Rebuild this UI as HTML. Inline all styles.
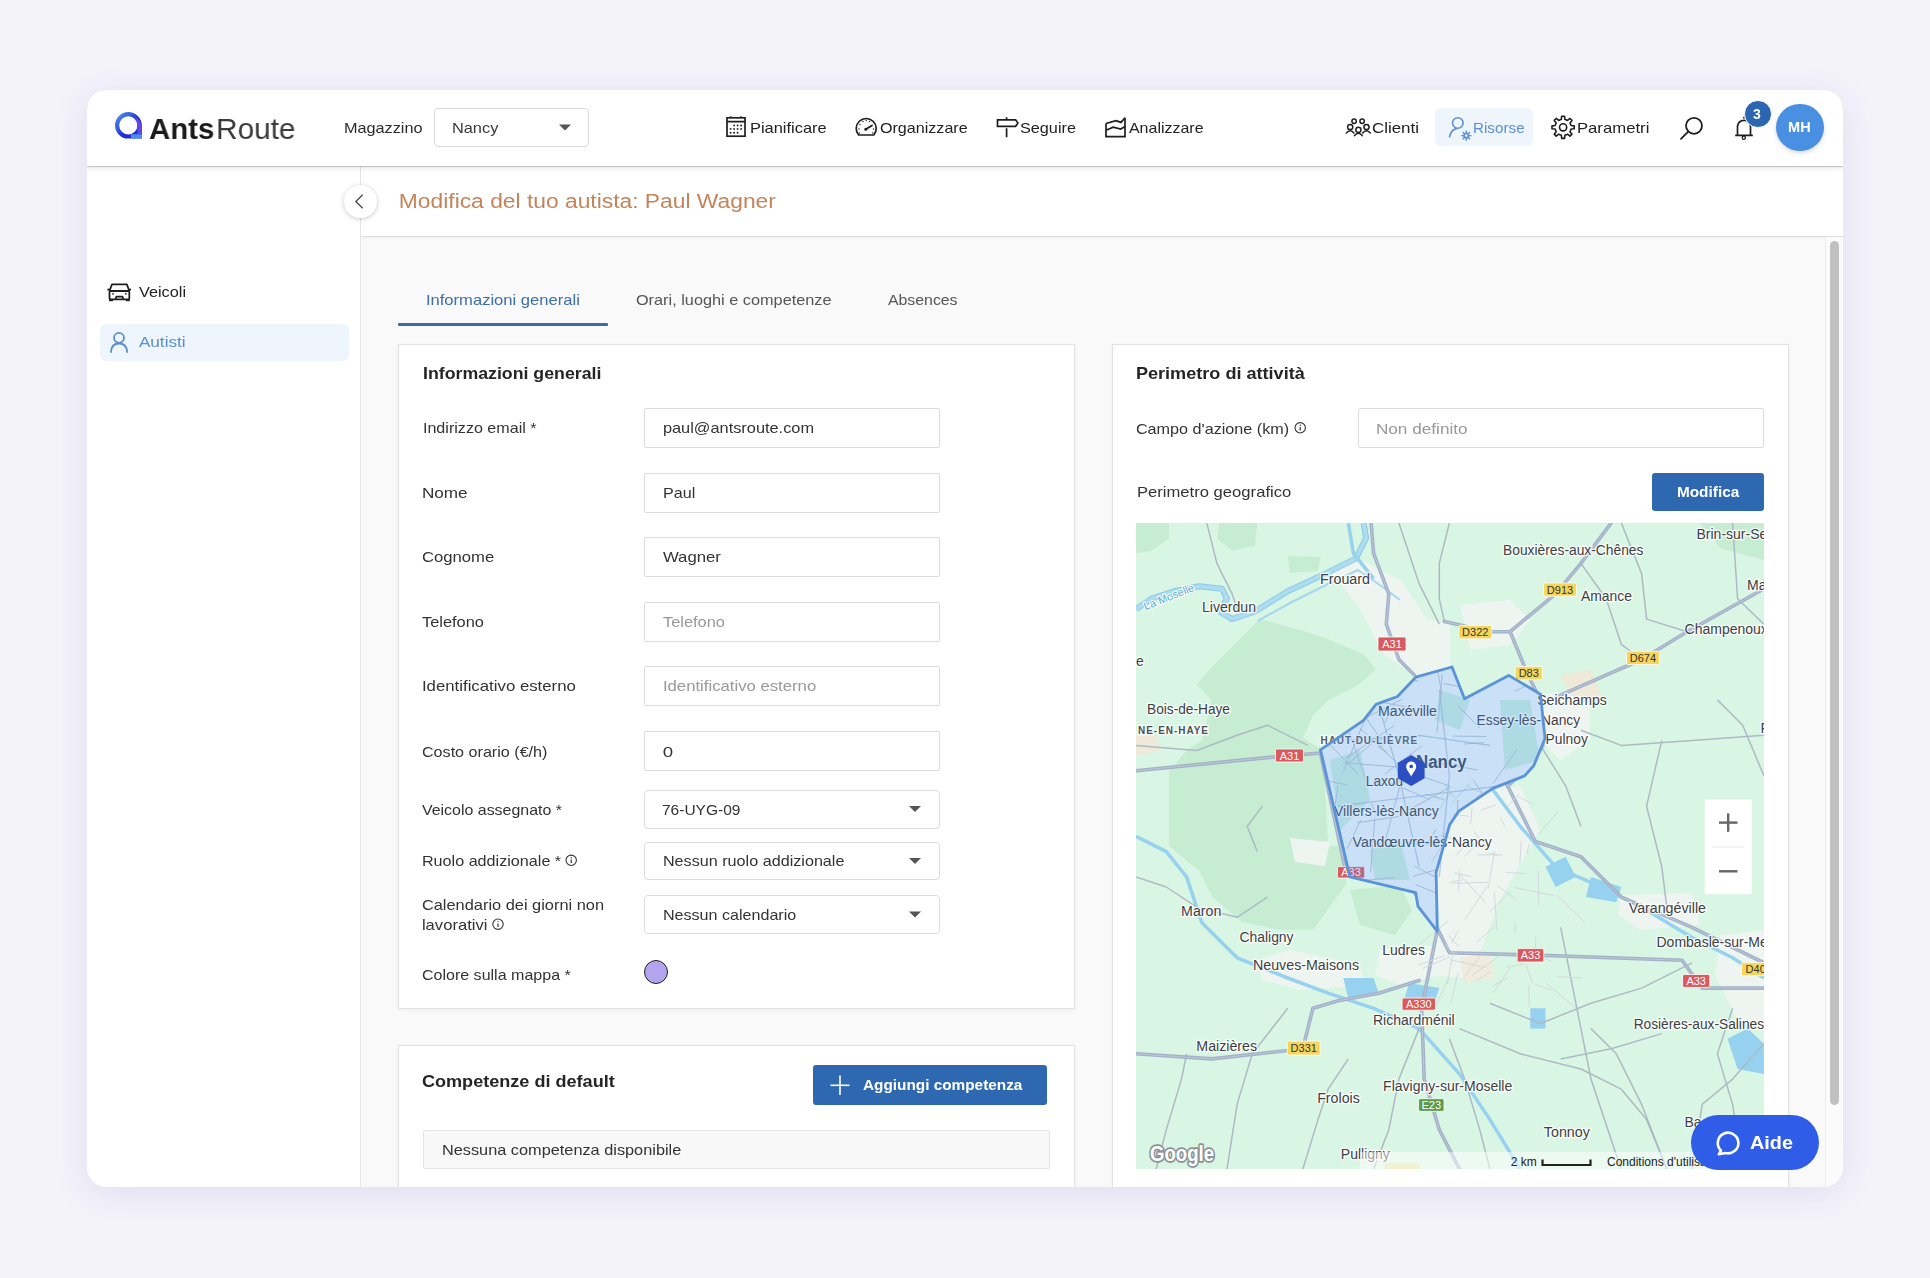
<!DOCTYPE html>
<html><head><meta charset="utf-8">
<style>
html,body{margin:0;padding:0}
body{width:1930px;height:1278px;background:#f4f2fb;position:relative;overflow:hidden;font-family:"Liberation Sans",sans-serif}
.t{position:absolute;line-height:1;white-space:nowrap;will-change:transform}
.a{position:absolute}
.card{position:absolute;left:87px;top:90px;width:1756px;height:1097px;background:#fff;border-radius:20px;overflow:hidden;box-shadow:0 6px 36px rgba(60,50,120,0.10)}
.in{position:absolute;left:-87px;top:-90px;width:1930px;height:1278px}
.inp{position:absolute;background:#fff;border:1px solid #dcdcdc;box-sizing:border-box;border-radius:2px}
.dd{position:absolute;background:#fff;border:1px solid #dcdcdc;box-sizing:border-box;border-radius:4px}
.box{position:absolute;background:#fff;border:1px solid #e2e2e2;box-sizing:border-box;box-shadow:0 1px 4px rgba(0,0,0,0.05)}
.btn{position:absolute;background:#2e68b1;border-radius:3px}
</style></head><body>
<div class="card"><div class="in">
<!-- main bg -->
<div class="a" style="left:361px;top:166px;width:1482px;height:1021px;background:#f9f9f9"></div>
<!-- title bar -->
<div class="a" style="left:361px;top:166px;width:1482px;height:70px;background:#fff;border-bottom:1px solid #dedede;box-shadow:0 1px 3px rgba(0,0,0,0.06)"></div>
<!-- sidebar -->
<div class="a" style="left:87px;top:166px;width:274px;height:1021px;background:#fff;border-right:1px solid #e6e6e6;box-sizing:border-box"></div>
<div class="a" style="left:99.5px;top:323.5px;width:249px;height:37px;background:#eef5fc;border-radius:6px"></div>
<!-- header -->
<div class="a" style="left:87px;top:90px;width:1756px;height:75.5px;background:#fff;box-shadow:0 1px 1px rgba(0,0,0,0.16),0 2px 6px rgba(0,0,0,0.10)"></div>
<div class="a" style="left:1434.7px;top:108px;width:98.5px;height:37.8px;background:#eef5fd;border-radius:6px"></div>
<div class="dd" style="left:433.6px;top:107.6px;width:155.4px;height:39.4px;border-color:#d9d9d9"></div>
<div class="a" style="left:1776px;top:103.8px;width:47.6px;height:47.6px;border-radius:50%;background:#4a90e2;box-shadow:0 2px 4px rgba(0,0,0,0.15)"></div>
<!-- scrollbar -->
<div class="a" style="left:1825px;top:237px;width:18px;height:950px;background:#fbfbfb;border-left:1px solid #ececec;box-sizing:border-box"></div>
<div class="a" style="left:1830.3px;top:241px;width:8.8px;height:864px;background:#c1c1c1;border-radius:5px"></div>
<!-- tabs -->
<div class="a" style="left:397.8px;top:322.8px;width:210.2px;height:3.2px;background:#3b6aa5;border-radius:1px"></div>
<!-- card1 -->
<div class="box" style="left:398px;top:344.3px;width:677px;height:664.5px"></div>
<div class="inp" style="left:644.4px;top:408px;width:295.6px;height:40.3px"></div>
<div class="inp" style="left:644.4px;top:472.6px;width:295.6px;height:40.3px"></div>
<div class="inp" style="left:644.4px;top:537px;width:295.6px;height:40.3px"></div>
<div class="inp" style="left:644.4px;top:601.6px;width:295.6px;height:40.3px"></div>
<div class="inp" style="left:644.4px;top:666px;width:295.6px;height:40.3px"></div>
<div class="inp" style="left:644.4px;top:730.6px;width:295.6px;height:40px"></div>
<div class="dd" style="left:644.4px;top:789.6px;width:295.6px;height:39px"></div>
<div class="dd" style="left:644.4px;top:841.8px;width:295.6px;height:38.6px"></div>
<div class="dd" style="left:644.4px;top:894.6px;width:295.6px;height:39.8px"></div>
<div class="a" style="left:643.8px;top:960.3px;width:24px;height:24px;border-radius:50%;background:#b2a5ee;border:1.5px solid #222;box-sizing:border-box"></div>
<!-- card2 -->
<div class="box" style="left:398px;top:1045.3px;width:677px;height:200px"></div>
<div class="btn" style="left:813.3px;top:1065.2px;width:234px;height:40.1px"></div>
<div class="a" style="left:423.3px;top:1130px;width:626.7px;height:39px;background:#f8f8f8;border:1px solid #e4e4e4;box-sizing:border-box;border-radius:2px"></div>
<!-- card3 -->
<div class="box" style="left:1111.8px;top:344.3px;width:677px;height:900px"></div>
<div class="inp" style="left:1358px;top:408.1px;width:405.6px;height:40.4px"></div>
<div class="btn" style="left:1652.2px;top:472.8px;width:111.4px;height:37.9px"></div>
<svg class="a" style="left:1136px;top:523px" width="628" height="646" viewBox="1136 523 628 646">
<rect x="1136" y="523" width="628" height="646" fill="#d9f5e3"/>
<path d="M1168.9 846.1 L1168.9 770.8 L1186.6 750.6 L1201.7 740.4 L1211.9 700 L1196.7 684.8 L1211.9 667.1 L1259.9 619.1 L1297.8 629.2 L1328.2 639.3 L1363.6 654.5 L1376.2 669.6 L1358.5 684.8 L1328.2 700 L1313 715.2 L1302.9 737.9 L1323.1 750.6 L1328.2 846.1 Z" fill="#c6edd2"/>
<path d="M1199.4 846 L1346.3 846 L1346.3 884 L1313.4 929.6 L1277.9 929.6 L1242.4 922 L1212 896.7 L1199.4 871.3 L1168.9 846.1 Z" fill="#c6edd2"/>
<path d="M1136 523 L1168.9 523 L1168.9 538.2 L1151.2 550.8 L1136 553.3 Z" fill="#c6edd2"/>
<path d="M1219.4 523 L1257.4 523 L1254.8 545.8 L1232.1 550.8 L1216.9 538.2 Z" fill="#c6edd2"/>
<path d="M1287.7 555.9 L1320.6 557 L1318 571 L1290 573 Z" fill="#c6edd2"/>
<path d="M1350 890 L1400 885 L1412 910 L1395 935 L1360 925 Z" fill="#c6edd2"/>
<path d="M1700 523 L1764 523 L1764 560 L1720 548 Z" fill="#c6edd2"/>
<path d="M1328.2 568.5 L1363.6 560.9 L1401.5 581.2 L1426.8 619.1 L1450 624.1 L1450 674.7 L1414.1 674.7 L1383.8 654.5 L1358.5 606.4 Z" fill="#eef5f1"/>
<path d="M1460 605 L1510 600 L1530 620 L1510 645 L1470 650 Z" fill="#eef5f1"/>
<path d="M1439 796 L1520 786 L1540 830 L1500 900 L1470 978 L1420 975 L1440 930 L1436 872 Z" fill="#eef5f1"/>
<path d="M1257 960 L1290 950 L1360 965 L1365 985 L1300 990 L1262 980 Z" fill="#eef5f1"/>
<path d="M1621 895 L1692 893 L1700 925 L1640 930 L1618 915 Z" fill="#eef5f1"/>
<path d="M1720 935 L1764 930 L1764 1030 L1735 1015 L1715 975 Z" fill="#eef5f1"/>
<path d="M1540 695 L1590 690 L1590 740 L1560 760 L1540 740 Z" fill="#eef5f1"/>
<path d="M1380 950 L1430 945 L1440 975 L1400 985 L1375 975 Z" fill="#eef5f1"/>
<path d="M1290 838 L1330 842 L1325 866 L1295 862 Z" fill="#eef5f1"/>
<path d="M1560.7 674.7 L1591.0 669.6 L1601.1 694.9 L1575.8 705.0 Z" fill="#efe9d9"/>
<path d="M1459.6 957.8 L1489.9 952.7 L1494.9 978.0 L1464.6 983.1 Z" fill="#f0ebdc"/>
<path d="M1136.0 735.3 L1156.2 735.3 L1161.3 750.5 L1136.0 755.6 Z" fill="#efe9d9"/>
<path d="M1545.5 866.8 L1565.7 856.7 L1575.8 876.9 L1555.6 887.0 Z" fill="#96d2ef"/>
<path d="M1591.0 876.9 L1621.3 887.0 L1616.3 902.2 L1585.9 897.1 Z" fill="#96d2ef"/>
<path d="M1727.5 1038.7 L1747.7 1028.6 L1763.9 1043.7 L1763.9 1074.1 L1737.6 1069.0 Z" fill="#96d2ef"/>
<path d="M1343.3 978.0 L1373.6 978.0 L1378.7 993.2 L1348.3 998.2 Z" fill="#96d2ef"/>
<path d="M1409.0 983.1 L1439.3 988.1 L1434.3 1003.3 L1403.9 1000.8 Z" fill="#96d2ef"/>
<path d="M1530.3 1008.3 L1545.5 1008.3 L1545.5 1028.6 L1530.3 1028.6 Z" fill="#96d2ef"/>
<path d="M1136 609 L1151.2 598.9 L1173.9 591.3 L1199.2 586.2 L1222 588.7 L1227 598.9 L1219.4 611.5 L1232.1 619.1 L1254.8 611.5 L1287.7 591.3 L1325.6 573.6 L1356 558.4 L1366.1 538.2 L1363.6 523" fill="none" stroke="#8fc9e6" stroke-width="6" stroke-linejoin="round"/>
<path d="M1136 609 L1151.2 598.9 L1173.9 591.3 L1199.2 586.2 L1222 588.7 L1227 598.9 L1219.4 611.5 L1232.1 619.1 L1254.8 611.5 L1287.7 591.3 L1325.6 573.6 L1356 558.4 L1366.1 538.2 L1363.6 523" fill="none" stroke="#abdcf1" stroke-width="4" stroke-linejoin="round"/>
<path d="M1257.4 621 L1290 603 L1330 583 L1358 570 L1380 585 L1400 600" fill="none" stroke="#a5d8ef" stroke-width="2" stroke-linejoin="round"/>
<path d="M1136.0 836.4 L1166.3 851.6 L1186.6 876.9 L1201.7 922.4 L1237.1 957.8 L1287.7 978.0 L1328.1 993.2 L1373.6 1008.3 L1419.1 1028.6 L1459.6 1074.1 L1489.9 1119.6 L1520.2 1169.1" fill="none" stroke="#96d2ef" stroke-width="3.5" stroke-linejoin="round"/>
<path d="M1469.7 745.4 L1489.9 785.9 L1520.2 826.3 L1555.6 866.8 L1601.1 887.0 L1641.6 907.2 L1692.1 937.6 L1732.6 957.8 L1763.9 978.0" fill="none" stroke="#96d2ef" stroke-width="3.5" stroke-linejoin="round"/>
<path d="M1348.3 523.0 L1353.4 553.3 L1373.6 578.6" fill="none" stroke="#96d2ef" stroke-width="3.5" stroke-linejoin="round"/>
<path d="M1136.0 745.4 L1196.7 750.5 L1237.1 735.3 L1267.4 725.2 L1307.9 745.4" fill="none" stroke="#adbac6" stroke-width="1.5" stroke-linejoin="round"/>
<path d="M1206.8 523.0 L1216.9 563.4 L1232.1 593.8 L1237.1 608.9" fill="none" stroke="#adbac6" stroke-width="1.5" stroke-linejoin="round"/>
<path d="M1439.3 624.1 L1419.1 583.7 L1409.0 553.3 L1398.9 523.0" fill="none" stroke="#adbac6" stroke-width="1.5" stroke-linejoin="round"/>
<path d="M1661.8 740.4 L1646.6 806.1 L1661.8 866.8 L1666.8 907.2" fill="none" stroke="#adbac6" stroke-width="1.5" stroke-linejoin="round"/>
<path d="M1580.9 730.3 L1621.3 745.4 L1692.1 740.4 L1763.9 735.3" fill="none" stroke="#adbac6" stroke-width="1.5" stroke-linejoin="round"/>
<path d="M1540.4 745.4 L1565.7 785.9 L1580.9 826.3" fill="none" stroke="#adbac6" stroke-width="1.5" stroke-linejoin="round"/>
<path d="M1621.3 523.0 L1641.6 573.6 L1646.6 619.1 L1687.1 631.7" fill="none" stroke="#adbac6" stroke-width="1.5" stroke-linejoin="round"/>
<path d="M1732.6 523.0 L1737.6 598.8 L1763.9 624.1" fill="none" stroke="#adbac6" stroke-width="1.5" stroke-linejoin="round"/>
<path d="M1717.4 699.9 L1742.7 725.2 L1763.9 775.8" fill="none" stroke="#adbac6" stroke-width="1.5" stroke-linejoin="round"/>
<path d="M1136.0 876.9 L1166.3 887.0 L1196.7 907.2 L1237.1 917.3 L1267.4 897.1" fill="none" stroke="#adbac6" stroke-width="1.5" stroke-linejoin="round"/>
<path d="M1156.2 1169.1 L1166.3 1129.7 L1181.5 1079.1 L1186.6 1053.8" fill="none" stroke="#adbac6" stroke-width="1.5" stroke-linejoin="round"/>
<path d="M1227.0 1169.1 L1237.1 1104.4 L1252.3 1053.8 L1287.7 1008.3" fill="none" stroke="#adbac6" stroke-width="1.5" stroke-linejoin="round"/>
<path d="M1302.8 1169.1 L1318.0 1119.6 L1328.1 1089.2 L1348.3 1058.9" fill="none" stroke="#adbac6" stroke-width="1.5" stroke-linejoin="round"/>
<path d="M1373.6 1169.1 L1388.8 1129.7 L1398.9 1079.1 L1419.1 1028.6" fill="none" stroke="#adbac6" stroke-width="1.5" stroke-linejoin="round"/>
<path d="M1489.9 1169.1 L1479.8 1129.7 L1464.6 1079.1 L1449.4 1038.7" fill="none" stroke="#adbac6" stroke-width="1.5" stroke-linejoin="round"/>
<path d="M1666.8 1169.1 L1641.6 1104.4 L1616.3 1053.8 L1591.0 1028.6" fill="none" stroke="#adbac6" stroke-width="1.5" stroke-linejoin="round"/>
<path d="M1742.7 1169.1 L1732.6 1104.4 L1717.4 1053.8 L1732.6 1008.3" fill="none" stroke="#adbac6" stroke-width="1.5" stroke-linejoin="round"/>
<path d="M1489.9 1003.3 L1540.4 1023.5 L1591.0 1003.3 L1641.6 988.1 L1692.1 962.8" fill="none" stroke="#adbac6" stroke-width="1.5" stroke-linejoin="round"/>
<path d="M1459.6 1028.6 L1520.2 1053.8 L1580.9 1069.0 L1621.3 1089.2 L1646.6 1119.6 L1666.8 1169.1" fill="none" stroke="#adbac6" stroke-width="1.5" stroke-linejoin="round"/>
<path d="M1560.7 1058.9 L1611.2 1048.8 L1661.8 1033.6" fill="none" stroke="#adbac6" stroke-width="1.5" stroke-linejoin="round"/>
<path d="M1449.4 523.0 L1439.3 563.4 L1439.3 598.8 L1444.4 621.6" fill="none" stroke="#adbac6" stroke-width="1.5" stroke-linejoin="round"/>
<path d="M1580.9 563.4 L1606.2 598.8 L1621.3 644.3 L1641.6 659.5" fill="none" stroke="#adbac6" stroke-width="1.5" stroke-linejoin="round"/>
<path d="M1763.9 1043.7 L1732.6 1079.1 L1702.2 1104.4 L1692.1 1169.1" fill="none" stroke="#adbac6" stroke-width="1.5" stroke-linejoin="round"/>
<path d="M1262.4 806.1 L1247.2 826.3 L1257.3 851.6" fill="none" stroke="#adbac6" stroke-width="1.5" stroke-linejoin="round"/>
<path d="M1560.7 927.4 L1591.0 1079.1 L1616.3 1155.0 L1621.3 1169.1" fill="none" stroke="#adbac6" stroke-width="1.5" stroke-linejoin="round"/>
<path d="M1136.0 770.7 L1277.6 756.6 L1320.5 753.0" fill="none" stroke="#a2b0c8" stroke-width="3.6" stroke-linejoin="round" stroke-linecap="round"/>
<path d="M1371.1 523.0 L1373.6 553.3 L1388.8 593.8 L1386.3 624.1 L1398.9 659.5 L1414.1 674.7" fill="none" stroke="#a2b0c8" stroke-width="3.6" stroke-linejoin="round" stroke-linecap="round"/>
<path d="M1444.4 621.6 L1489.9 631.7 L1510.1 631.7" fill="none" stroke="#a2b0c8" stroke-width="3.6" stroke-linejoin="round" stroke-linecap="round"/>
<path d="M1510.1 631.7 L1555.6 593.8 L1580.9 563.4 L1611.2 523.0" fill="none" stroke="#a2b0c8" stroke-width="3.6" stroke-linejoin="round" stroke-linecap="round"/>
<path d="M1510.1 631.7 L1527.8 674.7 L1540.4 699.9 L1543.0 745.4 L1530.3 765.7 L1507.6 785.9" fill="none" stroke="#a2b0c8" stroke-width="3.6" stroke-linejoin="round" stroke-linecap="round"/>
<path d="M1555.6 697.4 L1641.6 659.5 L1687.1 631.7 L1763.9 588.7" fill="none" stroke="#a2b0c8" stroke-width="3.6" stroke-linejoin="round" stroke-linecap="round"/>
<path d="M1507.6 785.9 L1535.4 841.5 L1580.9 856.7 L1621.3 897.1 L1692.1 927.4 L1763.9 962.8" fill="none" stroke="#a2b0c8" stroke-width="3.6" stroke-linejoin="round" stroke-linecap="round"/>
<path d="M1320.5 753.0 L1345.8 871.8 L1414.1 892.1 L1436.8 927.4 L1449.4 952.7 L1540.4 955.3 L1682.0 960.3 L1702.2 988.1 L1763.9 988.1" fill="none" stroke="#a2b0c8" stroke-width="3.6" stroke-linejoin="round" stroke-linecap="round"/>
<path d="M1436.8 932.5 L1421.6 1008.3 L1424.2 1079.1 L1439.3 1129.7 L1459.6 1169.1" fill="none" stroke="#a2b0c8" stroke-width="3.6" stroke-linejoin="round" stroke-linecap="round"/>
<path d="M1136.0 1053.8 L1211.8 1058.9 L1302.8 1048.8 L1312.9 1008.3 L1338.2 1000.8 L1378.7 993.2 L1419.1 980.5" fill="none" stroke="#a2b0c8" stroke-width="3.6" stroke-linejoin="round" stroke-linecap="round"/>
<path d="M1136.0 770.7 L1277.6 756.6 L1320.5 753.0" fill="none" stroke="#bdc8d8" stroke-width="1" stroke-linejoin="round" stroke-linecap="round"/>
<path d="M1371.1 523.0 L1373.6 553.3 L1388.8 593.8 L1386.3 624.1 L1398.9 659.5 L1414.1 674.7" fill="none" stroke="#bdc8d8" stroke-width="1" stroke-linejoin="round" stroke-linecap="round"/>
<path d="M1444.4 621.6 L1489.9 631.7 L1510.1 631.7" fill="none" stroke="#bdc8d8" stroke-width="1" stroke-linejoin="round" stroke-linecap="round"/>
<path d="M1510.1 631.7 L1555.6 593.8 L1580.9 563.4 L1611.2 523.0" fill="none" stroke="#bdc8d8" stroke-width="1" stroke-linejoin="round" stroke-linecap="round"/>
<path d="M1510.1 631.7 L1527.8 674.7 L1540.4 699.9 L1543.0 745.4 L1530.3 765.7 L1507.6 785.9" fill="none" stroke="#bdc8d8" stroke-width="1" stroke-linejoin="round" stroke-linecap="round"/>
<path d="M1555.6 697.4 L1641.6 659.5 L1687.1 631.7 L1763.9 588.7" fill="none" stroke="#bdc8d8" stroke-width="1" stroke-linejoin="round" stroke-linecap="round"/>
<path d="M1507.6 785.9 L1535.4 841.5 L1580.9 856.7 L1621.3 897.1 L1692.1 927.4 L1763.9 962.8" fill="none" stroke="#bdc8d8" stroke-width="1" stroke-linejoin="round" stroke-linecap="round"/>
<path d="M1320.5 753.0 L1345.8 871.8 L1414.1 892.1 L1436.8 927.4 L1449.4 952.7 L1540.4 955.3 L1682.0 960.3 L1702.2 988.1 L1763.9 988.1" fill="none" stroke="#bdc8d8" stroke-width="1" stroke-linejoin="round" stroke-linecap="round"/>
<path d="M1436.8 932.5 L1421.6 1008.3 L1424.2 1079.1 L1439.3 1129.7 L1459.6 1169.1" fill="none" stroke="#bdc8d8" stroke-width="1" stroke-linejoin="round" stroke-linecap="round"/>
<path d="M1136.0 1053.8 L1211.8 1058.9 L1302.8 1048.8 L1312.9 1008.3 L1338.2 1000.8 L1378.7 993.2 L1419.1 980.5" fill="none" stroke="#bdc8d8" stroke-width="1" stroke-linejoin="round" stroke-linecap="round"/>
<path d="M1415.7 677.2 L1452 667 L1464.5 698.8 L1508.7 675.4 L1540.5 694.2 L1545 738.5 L1533.7 765.7 L1524.6 775.9 L1492.8 788.4 L1458.8 811.1 L1449.7 824.7 L1436.1 872.3 L1437.3 931.3 L1418 906.4 L1415.7 892.7 L1349.9 876.9 L1321.5 754.4 L1320.4 749.8 L1363.5 720.3 L1376 704.4 L1397.5 696.5 Z" fill="#f5f7f7"/>
<path d="M1330 760 L1360 750 L1370 800 L1340 830 Z" fill="#cfefdf"/>
<path d="M1500 700 L1530 700 L1540 760 L1505 770 Z" fill="#cfefdf"/>
<path d="M1440 690 L1470 700 L1460 730 L1435 720 Z" fill="#cfefdf"/>
<path d="M1370 850 L1400 840 L1410 880 L1375 880 Z" fill="#cfefdf"/>
<clipPath id="pc"><path d="M1415.7 677.2 L1452 667 L1464.5 698.8 L1508.7 675.4 L1540.5 694.2 L1545 738.5 L1533.7 765.7 L1524.6 775.9 L1492.8 788.4 L1458.8 811.1 L1449.7 824.7 L1436.1 872.3 L1437.3 931.3 L1418 906.4 L1415.7 892.7 L1349.9 876.9 L1321.5 754.4 L1320.4 749.8 L1363.5 720.3 L1376 704.4 L1397.5 696.5 Z"/></clipPath>
<path d="M1392.9 706.7 L1384.5 722.9 M1440.6 763.2 L1477.8 770.0 M1328.4 781.0 L1347.1 785.2 M1415.5 884.5 L1438.7 894.0 M1461.2 916.2 L1453.3 948.1 M1539.7 679.3 L1514.4 691.3 M1352.5 698.0 L1381.7 740.6 M1360.7 820.0 L1347.2 848.7 M1443.2 683.5 L1467.1 688.0 M1473.1 779.5 L1495.9 814.0 M1422.0 745.8 L1384.9 773.8 M1374.9 818.1 L1370.6 872.3 M1484.1 742.7 L1463.9 744.0 M1414.1 866.1 L1446.9 883.1 M1328.8 842.7 L1298.7 870.2 M1517.0 749.5 L1492.9 783.6 M1450.5 787.0 L1400.1 814.7 M1426.7 841.7 L1472.4 850.5 M1465.6 928.2 L1442.0 942.9 M1406.8 842.9 L1442.5 845.4 M1357.8 697.8 L1406.5 706.9 M1349.1 732.1 L1367.3 783.2 M1338.1 785.1 L1329.7 839.2 M1504.3 894.2 L1525.9 920.1 M1400.7 899.5 L1379.1 902.4 M1359.6 728.0 L1387.0 752.6 M1452.6 736.1 L1486.4 736.5 M1403.1 815.9 L1357.5 822.7 M1436.0 829.4 L1426.8 844.3 M1522.4 872.1 L1475.4 891.7 M1408.3 771.9 L1449.5 785.8 M1334.0 684.7 L1351.7 698.3 M1396.5 680.8 L1418.3 680.8 M1342.8 762.6 L1397.0 767.0 M1458.2 706.1 L1479.7 727.9 M1401.9 699.3 L1348.8 726.6 M1424.8 794.2 L1443.7 799.5 M1397.1 736.6 L1378.0 748.0 M1325.2 917.1 L1323.3 938.6 M1442.2 674.1 L1437.0 732.9 M1514.2 850.1 L1535.7 873.1 M1357.6 870.0 L1352.5 919.8 M1394.2 725.7 L1345.0 758.8 M1511.8 879.0 L1471.2 905.1 M1371.0 803.1 L1378.2 817.8 M1326.3 740.5 L1358.0 774.1 M1535.2 784.6 L1476.9 796.3 M1534.9 762.9 L1554.3 779.0 M1364.3 720.8 L1343.2 772.1 M1509.1 793.1 L1485.5 838.3 M1339.1 840.7 L1290.9 854.8 M1488.8 792.7 L1531.6 819.6 M1394.8 877.6 L1362.1 880.5 M1410.3 916.0 L1395.6 933.2 M1348.6 706.8 L1299.6 721.9 M1352.9 884.4 L1308.4 887.1 M1398.8 811.3 L1413.2 817.6 M1538.5 837.9 L1533.7 894.7 M1417.6 896.3 L1396.7 909.0 M1376.7 744.1 L1406.8 772.4 M1378.4 777.2 L1429.6 799.6 M1399.6 787.5 L1385.2 841.3 M1414.6 908.4 L1414.4 947.3 M1437.8 671.9 L1442.1 694.7 M1320.9 877.2 L1352.0 895.9 M1483.2 813.4 L1503.1 846.1 M1445.0 873.3 L1483.0 886.4 M1375.9 739.8 L1347.3 764.7 M1446.4 866.9 L1412.8 876.4 M1457.8 800.0 L1456.1 846.1" stroke="#b9c4d2" stroke-width="1" fill="none" clip-path="url(#pc)"/>
<path d="M1494.3 892.0 L1496.9 930.1 M1523.9 964.1 L1506.4 967.3 M1507.1 978.1 L1494.8 984.9 M1454.6 872.8 L1471.4 876.7 M1448.8 920.6 L1420.0 943.8 M1458.5 930.4 L1451.6 942.9 M1545.9 983.2 L1575.7 1007.7 M1487.8 882.3 L1452.8 883.4 M1459.4 870.6 L1458.4 890.8 M1463.5 846.9 L1456.7 855.0 M1506.5 872.5 L1526.4 873.6 M1514.9 887.6 L1553.6 895.5 M1534.6 984.1 L1551.6 989.9 M1444.8 943.6 L1453.9 954.0 M1490.7 971.4 L1475.7 981.0 M1457.9 973.0 L1451.1 1003.3 M1450.7 792.1 L1438.0 811.0 M1448.7 977.1 L1434.7 1008.1 M1450.0 959.8 L1485.1 967.3 M1494.5 851.2 L1488.2 888.5 M1472.1 807.1 L1470.7 824.2 M1453.1 813.9 L1469.0 816.4 M1477.4 844.1 L1463.8 856.9 M1500.0 817.4 L1504.9 826.7 M1470.1 783.2 L1452.3 803.0 M1462.7 879.7 L1449.8 882.4 M1538.3 870.8 L1538.8 905.8 M1487.2 886.4 L1465.2 919.2 M1481.1 954.8 L1463.5 977.9 M1488.6 853.0 L1502.3 855.3 M1448.5 935.6 L1458.8 946.3 M1450.1 956.7 L1422.5 968.6 M1473.8 830.9 L1488.2 849.8 M1458.9 873.6 L1485.2 902.2 M1556.7 894.9 L1584.7 922.0 M1477.1 854.9 L1498.6 855.0 M1497.0 885.6 L1517.3 900.4 M1440.6 835.5 L1461.7 841.6 M1445.0 784.7 L1454.8 798.6 M1510.3 891.1 L1489.2 912.1 M1525.9 964.6 L1532.6 983.2 M1558.2 811.4 L1539.2 833.7 M1445.3 955.4 L1418.1 965.0 M1528.1 950.6 L1551.4 961.5 M1500.5 955.3 L1472.1 975.4 M1510.1 967.5 L1493.3 993.3 M1467.6 786.5 L1486.6 795.0 M1452.6 955.5 L1447.3 983.9 M1515.1 922.9 L1515.5 933.0 M1535.7 937.1 L1535.5 963.2 M1519.1 793.9 L1507.2 806.8 M1448.9 835.8 L1438.3 847.9 M1528.8 984.9 L1529.2 1006.4 M1497.5 923.6 L1476.3 942.6 M1517.1 796.3 L1532.9 804.1 M1529.2 843.9 L1527.0 854.1 M1447.3 836.4 L1431.5 862.8 M1521.1 841.1 L1519.8 865.0 M1496.0 804.9 L1480.9 810.1 M1557.4 976.6 L1581.1 977.9" stroke="#d2d9e0" stroke-width="1" fill="none"/>
<path d="M1348.3 740.4 L1419.1 735.3 L1489.9 745.4 M1338.2 806.1 L1419.1 796.0 L1500.0 785.9 M1378.7 705.0 L1398.9 775.8 L1419.1 866.8 M1439.3 689.8 L1449.4 775.8 L1439.3 876.9" fill="none" stroke="#9fb3cf" stroke-width="1.2" opacity="0.7"/>
<rect x="1543.6" y="583" width="32.80000000000018" height="13.299999999999955" rx="1.5" fill="#f6d65a" stroke="#fff" stroke-width="0.8"/><text x="1560.0" y="593.6" font-family="Liberation Sans" font-size="11" fill="#333" text-anchor="middle">D913</text>
<rect x="1458.8" y="625.4" width="32.90000000000009" height="13.399999999999977" rx="1.5" fill="#f6d65a" stroke="#fff" stroke-width="0.8"/><text x="1475.25" y="636.1" font-family="Liberation Sans" font-size="11" fill="#333" text-anchor="middle">D322</text>
<rect x="1626.5" y="651.2" width="32.90000000000009" height="13.399999999999977" rx="1.5" fill="#f6d65a" stroke="#fff" stroke-width="0.8"/><text x="1642.95" y="661.9" font-family="Liberation Sans" font-size="11" fill="#333" text-anchor="middle">D674</text>
<rect x="1515.2" y="666.4" width="27.09999999999991" height="13.399999999999977" rx="1.5" fill="#f6d65a" stroke="#fff" stroke-width="0.8"/><text x="1528.75" y="677.1" font-family="Liberation Sans" font-size="11" fill="#333" text-anchor="middle">D83</text>
<rect x="1378" y="637" width="28" height="14" rx="1.5" fill="#d9595c" stroke="#fff" stroke-width="0.8"/><text x="1392.0" y="648.0" font-family="Liberation Sans" font-size="11" fill="#fff" text-anchor="middle">A31</text>
<rect x="1275.5" y="749" width="28.0" height="13" rx="1.5" fill="#d9595c" stroke="#fff" stroke-width="0.8"/><text x="1289.5" y="759.5" font-family="Liberation Sans" font-size="11" fill="#fff" text-anchor="middle">A31</text>
<rect x="1337.4" y="866.6" width="27.299999999999955" height="11.399999999999977" rx="1.5" fill="#d9595c" stroke="#fff" stroke-width="0.8"/><text x="1351.0500000000002" y="876.3" font-family="Liberation Sans" font-size="11" fill="#fff" text-anchor="middle">A33</text>
<rect x="1517.2" y="948.6" width="26.59999999999991" height="13.399999999999977" rx="1.5" fill="#d9595c" stroke="#fff" stroke-width="0.8"/><text x="1530.5" y="959.3" font-family="Liberation Sans" font-size="11" fill="#fff" text-anchor="middle">A33</text>
<rect x="1682.6" y="974.5" width="27.200000000000045" height="12.899999999999977" rx="1.5" fill="#d9595c" stroke="#fff" stroke-width="0.8"/><text x="1696.1999999999998" y="984.9" font-family="Liberation Sans" font-size="11" fill="#fff" text-anchor="middle">A33</text>
<rect x="1402.1" y="998" width="33.40000000000009" height="12.200000000000045" rx="1.5" fill="#d9595c" stroke="#fff" stroke-width="0.8"/><text x="1418.8" y="1008.1" font-family="Liberation Sans" font-size="11" fill="#fff" text-anchor="middle">A330</text>
<rect x="1287.3" y="1041.1" width="32.90000000000009" height="13.900000000000091" rx="1.5" fill="#f6d65a" stroke="#fff" stroke-width="0.8"/><text x="1303.75" y="1052.0" font-family="Liberation Sans" font-size="11" fill="#333" text-anchor="middle">D331</text>
<rect x="1418.6" y="1098.7" width="25.40000000000009" height="12.599999999999909" rx="1.5" fill="#5a9a4a" stroke="#fff" stroke-width="0.8"/><text x="1431.3" y="1109.0" font-family="Liberation Sans" font-size="11" fill="#fff" text-anchor="middle">E23</text>
<rect x="1741.4" y="962.6" width="28.59999999999991" height="13.100000000000023" rx="1.5" fill="#f6d65a" stroke="#fff" stroke-width="0.8"/><text x="1755.7" y="973.1" font-family="Liberation Sans" font-size="11" fill="#333" text-anchor="middle">D40</text>
<text x="1696.5" y="538.7" font-family="Liberation Sans" font-size="14" fill="#3c4043" stroke="#fff" stroke-width="2.5" stroke-opacity="0.85" paint-order="stroke">Brin-sur-Se</text>
<text x="1503" y="555.4" font-family="Liberation Sans" font-size="14" fill="#3c4043" stroke="#fff" stroke-width="2.5" stroke-opacity="0.85" paint-order="stroke" textLength="140.4" lengthAdjust="spacingAndGlyphs">Bouxières-aux-Chênes</text>
<text x="1320" y="584" font-family="Liberation Sans" font-size="14" fill="#3c4043" stroke="#fff" stroke-width="2.5" stroke-opacity="0.85" paint-order="stroke" textLength="50" lengthAdjust="spacingAndGlyphs">Frouard</text>
<text x="1581" y="601.4" font-family="Liberation Sans" font-size="14" fill="#3c4043" stroke="#fff" stroke-width="2.5" stroke-opacity="0.85" paint-order="stroke" textLength="51" lengthAdjust="spacingAndGlyphs">Amance</text>
<text x="1747" y="590" font-family="Liberation Sans" font-size="14" fill="#3c4043" stroke="#fff" stroke-width="2.5" stroke-opacity="0.85" paint-order="stroke">Ma</text>
<text x="1202" y="612" font-family="Liberation Sans" font-size="14" fill="#3c4043" stroke="#fff" stroke-width="2.5" stroke-opacity="0.85" paint-order="stroke" textLength="54" lengthAdjust="spacingAndGlyphs">Liverdun</text>
<text x="1684.6" y="633.7" font-family="Liberation Sans" font-size="14" fill="#3c4043" stroke="#fff" stroke-width="2.5" stroke-opacity="0.85" paint-order="stroke">Champenoux</text>
<text x="1136" y="666" font-family="Liberation Sans" font-size="14" fill="#3c4043" stroke="#fff" stroke-width="2.5" stroke-opacity="0.85" paint-order="stroke">e</text>
<text x="1537.2" y="705" font-family="Liberation Sans" font-size="14" fill="#3c4043" stroke="#fff" stroke-width="2.5" stroke-opacity="0.85" paint-order="stroke" textLength="69.6" lengthAdjust="spacingAndGlyphs">Seichamps</text>
<text x="1147" y="714" font-family="Liberation Sans" font-size="14" fill="#3c4043" stroke="#fff" stroke-width="2.5" stroke-opacity="0.85" paint-order="stroke" textLength="83" lengthAdjust="spacingAndGlyphs">Bois-de-Haye</text>
<text x="1378" y="715.8" font-family="Liberation Sans" font-size="14" fill="#3c4043" stroke="#fff" stroke-width="2.5" stroke-opacity="0.85" paint-order="stroke" textLength="59" lengthAdjust="spacingAndGlyphs">Maxéville</text>
<text x="1476.5" y="724.5" font-family="Liberation Sans" font-size="14" fill="#3c4043" stroke="#fff" stroke-width="2.5" stroke-opacity="0.85" paint-order="stroke" textLength="103.7" lengthAdjust="spacingAndGlyphs">Essey-lès-Nancy</text>
<text x="1545.6" y="744.2" font-family="Liberation Sans" font-size="14" fill="#3c4043" stroke="#fff" stroke-width="2.5" stroke-opacity="0.85" paint-order="stroke" textLength="42.2" lengthAdjust="spacingAndGlyphs">Pulnoy</text>
<text x="1760.5" y="733" font-family="Liberation Sans" font-size="14" fill="#3c4043" stroke="#fff" stroke-width="2.5" stroke-opacity="0.85" paint-order="stroke">F</text>
<text x="1365.8" y="786" font-family="Liberation Sans" font-size="14" fill="#3c4043" stroke="#fff" stroke-width="2.5" stroke-opacity="0.85" paint-order="stroke" textLength="37.2" lengthAdjust="spacingAndGlyphs">Laxou</text>
<text x="1334" y="815.6" font-family="Liberation Sans" font-size="14" fill="#3c4043" stroke="#fff" stroke-width="2.5" stroke-opacity="0.85" paint-order="stroke" textLength="104.8" lengthAdjust="spacingAndGlyphs">Villers-lès-Nancy</text>
<text x="1352.6" y="847.4" font-family="Liberation Sans" font-size="14" fill="#3c4043" stroke="#fff" stroke-width="2.5" stroke-opacity="0.85" paint-order="stroke" textLength="139.1" lengthAdjust="spacingAndGlyphs">Vandœuvre-lès-Nancy</text>
<text x="1181.1" y="915.7" font-family="Liberation Sans" font-size="14" fill="#3c4043" stroke="#fff" stroke-width="2.5" stroke-opacity="0.85" paint-order="stroke" textLength="40.3" lengthAdjust="spacingAndGlyphs">Maron</text>
<text x="1628.7" y="913.2" font-family="Liberation Sans" font-size="14" fill="#3c4043" stroke="#fff" stroke-width="2.5" stroke-opacity="0.85" paint-order="stroke" textLength="77.3" lengthAdjust="spacingAndGlyphs">Varangéville</text>
<text x="1239.4" y="942.3" font-family="Liberation Sans" font-size="14" fill="#3c4043" stroke="#fff" stroke-width="2.5" stroke-opacity="0.85" paint-order="stroke" textLength="54.2" lengthAdjust="spacingAndGlyphs">Chaligny</text>
<text x="1656.5" y="947.4" font-family="Liberation Sans" font-size="14" fill="#3c4043" stroke="#fff" stroke-width="2.5" stroke-opacity="0.85" paint-order="stroke">Dombasle-sur-Me</text>
<text x="1382.3" y="954.5" font-family="Liberation Sans" font-size="14" fill="#3c4043" stroke="#fff" stroke-width="2.5" stroke-opacity="0.85" paint-order="stroke" textLength="42.7" lengthAdjust="spacingAndGlyphs">Ludres</text>
<text x="1253" y="970.2" font-family="Liberation Sans" font-size="14" fill="#3c4043" stroke="#fff" stroke-width="2.5" stroke-opacity="0.85" paint-order="stroke" textLength="106" lengthAdjust="spacingAndGlyphs">Neuves-Maisons</text>
<text x="1373" y="1024.7" font-family="Liberation Sans" font-size="14" fill="#3c4043" stroke="#fff" stroke-width="2.5" stroke-opacity="0.85" paint-order="stroke">Richardménil</text>
<text x="1633.7" y="1028.5" font-family="Liberation Sans" font-size="14" fill="#3c4043" stroke="#fff" stroke-width="2.5" stroke-opacity="0.85" paint-order="stroke" textLength="130.3" lengthAdjust="spacingAndGlyphs">Rosières-aux-Salines</text>
<text x="1196.3" y="1050.8" font-family="Liberation Sans" font-size="14" fill="#3c4043" stroke="#fff" stroke-width="2.5" stroke-opacity="0.85" paint-order="stroke" textLength="60.8" lengthAdjust="spacingAndGlyphs">Maizières</text>
<text x="1383.1" y="1090.5" font-family="Liberation Sans" font-size="14" fill="#3c4043" stroke="#fff" stroke-width="2.5" stroke-opacity="0.85" paint-order="stroke">Flavigny-sur-Moselle</text>
<text x="1317.2" y="1102.5" font-family="Liberation Sans" font-size="14" fill="#3c4043" stroke="#fff" stroke-width="2.5" stroke-opacity="0.85" paint-order="stroke" textLength="42.6" lengthAdjust="spacingAndGlyphs">Frolois</text>
<text x="1684.4" y="1127.3" font-family="Liberation Sans" font-size="14" fill="#3c4043" stroke="#fff" stroke-width="2.5" stroke-opacity="0.85" paint-order="stroke">Ba</text>
<text x="1543.8" y="1137.4" font-family="Liberation Sans" font-size="14" fill="#3c4043" stroke="#fff" stroke-width="2.5" stroke-opacity="0.85" paint-order="stroke" textLength="46.1" lengthAdjust="spacingAndGlyphs">Tonnoy</text>
<text x="1340.8" y="1159" font-family="Liberation Sans" font-size="14" fill="#3c4043" stroke="#fff" stroke-width="2.5" stroke-opacity="0.85" paint-order="stroke">Pulligny</text>
<text x="1416" y="768" font-family="Liberation Sans" font-size="18" fill="#39465a" stroke="#fff" stroke-width="2.5" stroke-opacity="0.85" paint-order="stroke" textLength="50.7" lengthAdjust="spacingAndGlyphs" font-weight="700">Nancy</text>
<text x="1320.5" y="744" font-family="Liberation Sans" font-size="10" fill="#555a60" stroke="#fff" stroke-width="2.5" stroke-opacity="0.85" paint-order="stroke" textLength="97.5" lengthAdjust="spacingAndGlyphs" font-weight="700" letter-spacing="1">HAUT-DU-LIÈVRE</text>
<text x="1138" y="734" font-family="Liberation Sans" font-size="10" fill="#4a4f56" stroke="#fff" stroke-width="2.5" stroke-opacity="0.85" paint-order="stroke" textLength="71" lengthAdjust="spacingAndGlyphs" font-weight="700" letter-spacing="1">NE-EN-HAYE</text>
<text x="1142" y="604" font-family="Liberation Sans" font-size="11" fill="#5aa9d0" transform="rotate(-22 1160 598)" stroke="#fff" stroke-width="2" paint-order="stroke">La Moselle</text>
<path d="M1415.7 677.2 L1452 667 L1464.5 698.8 L1508.7 675.4 L1540.5 694.2 L1545 738.5 L1533.7 765.7 L1524.6 775.9 L1492.8 788.4 L1458.8 811.1 L1449.7 824.7 L1436.1 872.3 L1437.3 931.3 L1418 906.4 L1415.7 892.7 L1349.9 876.9 L1321.5 754.4 L1320.4 749.8 L1363.5 720.3 L1376 704.4 L1397.5 696.5 Z" fill="#4a9af5" fill-opacity="0.25" stroke="#5a93d8" stroke-width="2.8" stroke-linejoin="round"/>
<path d="M1411.2 755.0 L1424.6 762.8 L1424.6 778.2 L1411.2 786.0 L1397.8 778.2 L1397.8 762.8 Z" fill="#2d4fc4"/>
<path d="M1411.2 776.5 C1409.2 772.5 1406.2 769.5 1406.2 766.5 A5 5 0 1 1 1416.2 766.5 C1416.2 769.5 1413.2 772.5 1411.2 776.5 Z M1411.2 764.5 A1.9 1.9 0 1 0 1411.2 768.3 A1.9 1.9 0 1 0 1411.2 764.5 Z" fill="#fff" fill-rule="evenodd"/>
<rect x="1704.7" y="799.4" width="47" height="94.8" fill="#fff" rx="1"/>
<line x1="1712" y1="847" x2="1744" y2="847" stroke="#e6e6e6" stroke-width="1"/>
<g stroke="#666" stroke-width="2.4"><line x1="1719" y1="822.6" x2="1737.5" y2="822.6"/><line x1="1728.2" y1="813.4" x2="1728.2" y2="831.8"/><line x1="1719" y1="871.3" x2="1737.5" y2="871.3"/></g>
<rect x="1385" y="1163" width="35" height="10" rx="1.5" fill="#f6d65a" opacity="0.5"/>
<rect x="1360" y="1152" width="404" height="17" fill="#fff" fill-opacity="0.5"/>
<text x="1510.8" y="1165.8" font-family="Liberation Sans" font-size="12" fill="#222">2 km</text>
<path d="M1542.5 1159.5 L1542.5 1165 L1590.5 1165 L1590.5 1159.5" fill="none" stroke="#222" stroke-width="2.2"/>
<text x="1607" y="1165.8" font-family="Liberation Sans" font-size="12" fill="#222">Conditions d'utilisation</text>
<text x="1150" y="1161" font-family="Liberation Sans" font-size="22" font-weight="700" fill="#fff" stroke="#8c9196" stroke-width="3.6" stroke-linejoin="round" paint-order="stroke" textLength="64" lengthAdjust="spacingAndGlyphs">Google</text>
</svg>
<div class="a" style="left:344.2px;top:185.1px;width:32.8px;height:32.8px;border-radius:50%;background:#fff;box-shadow:0 1px 5px rgba(0,0,0,0.22)"></div>
<svg class="a" style="left:0;top:0" width="1930" height="1278" viewBox="0 0 1930 1278">
<path d="M362.7 194.8 L355.9 201.5 L362.7 208.3" fill="none" stroke="#555" stroke-width="1.5"/>
<defs>
<linearGradient id="lg1" x1="0" y1="0" x2="1" y2="1"><stop offset="0" stop-color="#5aa0ee"/><stop offset="0.6" stop-color="#1d2bd8"/><stop offset="1" stop-color="#2030d8"/></linearGradient>
<linearGradient id="lg2" x1="0" y1="0" x2="0" y2="1"><stop offset="0" stop-color="#5b45e6"/><stop offset="1" stop-color="#6a4fe8"/></linearGradient>
</defs>
<path fill-rule="evenodd" fill="url(#lg1)" d="M128.3 112 A13.3 13.3 0 1 0 128.3 138.6 L141.8 138.6 L141.8 125.3 A13.5 13.3 0 0 0 128.3 112 Z M128.3 116.3 A9.1 9.1 0 1 1 128.3 134.5 A9.1 9.1 0 1 1 128.3 116.3 Z"/>
<path fill="#6547e6" d="M135.5 117.5 A13 13 0 0 1 141.8 125.3 L141.8 134 L137.4 134 L137.4 125.3 A9.1 9.1 0 0 0 134 118.2 Z"/><path fill="#4d8cec" d="M131 134.3 L141.8 134.3 L141.8 138.6 L131 138.6 Z"/>
<path d="M559 124.5 L571 124.5 L565 130.5 Z" fill="#555"/>
<path d="M909 806 L921 806 L915 812 Z" fill="#555"/>
<path d="M909 858 L921 858 L915 864 Z" fill="#555"/>
<path d="M909 911.5 L921 911.5 L915 917.5 Z" fill="#555"/>
<g fill="none" stroke="#1e1e1e" stroke-width="1.7"><rect x="727" y="117.8" width="18" height="18.4"/><line x1="727" y1="121.6" x2="745" y2="121.6"/></g>
<g fill="#1e1e1e"><circle cx="734.1" cy="125.4" r="0.95"/><circle cx="737.6" cy="125.4" r="0.95"/><circle cx="741.1" cy="125.4" r="0.95"/><circle cx="730.6" cy="128.9" r="0.95"/><circle cx="734.1" cy="128.9" r="0.95"/><circle cx="737.6" cy="128.9" r="0.95"/><circle cx="741.1" cy="128.9" r="0.95"/><circle cx="730.6" cy="132.7" r="0.95"/><circle cx="734.1" cy="132.7" r="0.95"/><circle cx="737.6" cy="132.7" r="0.95"/><circle cx="730.7" cy="117.2" r="0.95"/><circle cx="741" cy="117.2" r="0.95"/></g>
<path d="M858.6 135 A10 10 0 1 1 873.8 135 Z" fill="none" stroke="#1e1e1e" stroke-width="1.7" stroke-linejoin="round"/>
<path d="M865.8 129.3 L872 125.5" stroke="#1e1e1e" stroke-width="1.8" stroke-linecap="round"/><circle cx="865.8" cy="129.3" r="1.5" fill="#1e1e1e"/>
<g fill="#1e1e1e"><circle cx="859" cy="129" r="0.7"/><circle cx="860" cy="124.5" r="0.7"/><circle cx="863" cy="121.5" r="0.7"/><circle cx="866.2" cy="120.5" r="0.7"/><circle cx="869.5" cy="121.5" r="0.7"/><circle cx="873.5" cy="129" r="0.7"/><circle cx="859.5" cy="133" r="0.7"/><circle cx="872.8" cy="133" r="0.7"/></g>
<g fill="none" stroke="#1e1e1e" stroke-width="1.7" stroke-linejoin="miter"><path d="M997.5 119.8 L1015.6 119.8 L1017.9 123.1 L1015.6 126.3 L997.5 126.3 Z"/><line x1="1006.6" y1="117.3" x2="1006.6" y2="119.8"/><line x1="1006.6" y1="128.3" x2="1006.6" y2="137.2"/></g>
<g fill="none" stroke="#1e1e1e" stroke-width="1.7" stroke-linejoin="miter"><path d="M1106 123.5 L1106 136.6 L1125 136.6 L1125 117.8"/><path d="M1106 123.5 L1116 120.6 L1121 122.4 L1125 117.8"/><path d="M1106 130.3 L1113.2 127.1 L1120.7 129 L1125 126.4"/></g>
<g fill="none" stroke="#1e1e1e" stroke-width="1.5" stroke-linecap="round"><circle cx="1354.1" cy="121.3" r="2.2"/><circle cx="1362.1" cy="121.3" r="2.2"/><circle cx="1350.2" cy="127" r="2.6"/><path d="M1346.3 133 Q1350.2 128.5 1354 133"/><circle cx="1366.5" cy="127" r="2.6"/><path d="M1362.6 133 Q1366.5 128.5 1370.3 133"/><circle cx="1358.4" cy="129.8" r="2.6"/><path d="M1354.5 135.6 Q1358.4 131 1362.2 135.6"/></g>
<g fill="none" stroke="#5b8fd6" stroke-width="1.6" stroke-linecap="round"><circle cx="1457.8" cy="123" r="5.3"/><path d="M1449.6 136.8 Q1451 129.5 1456.5 128.6"/></g>
<path d="M1469.43 134.91 L1471.46 134.95 L1471.46 136.25 L1469.43 136.29 L1469.00 137.33 L1470.41 138.79 L1469.49 139.71 L1468.03 138.30 L1466.99 138.73 L1466.95 140.76 L1465.65 140.76 L1465.61 138.73 L1464.57 138.30 L1463.11 139.71 L1462.19 138.79 L1463.60 137.33 L1463.17 136.29 L1461.14 136.25 L1461.14 134.95 L1463.17 134.91 L1463.60 133.87 L1462.19 132.41 L1463.11 131.49 L1464.57 132.90 L1465.61 132.47 L1465.65 130.44 L1466.95 130.44 L1466.99 132.47 L1468.03 132.90 L1469.49 131.49 L1470.41 132.41 L1469.00 133.87 Z M1467.60 135.60 A1.3 1.3 0 1 0 1465.00 135.60 A1.3 1.3 0 1 0 1467.60 135.60 Z" fill="#5b8fd6" fill-rule="evenodd"/>
<path d="M1571.11 125.54 L1574.21 125.90 L1574.21 128.70 L1571.11 129.06 L1570.01 131.72 L1571.95 134.16 L1569.96 136.15 L1567.52 134.21 L1564.86 135.31 L1564.50 138.41 L1561.70 138.41 L1561.34 135.31 L1558.68 134.21 L1556.24 136.15 L1554.25 134.16 L1556.19 131.72 L1555.09 129.06 L1551.99 128.70 L1551.99 125.90 L1555.09 125.54 L1556.19 122.88 L1554.25 120.44 L1556.24 118.45 L1558.68 120.39 L1561.34 119.29 L1561.70 116.19 L1564.50 116.19 L1564.86 119.29 L1567.52 120.39 L1569.96 118.45 L1571.95 120.44 L1570.01 122.88 Z" fill="none" stroke="#1e1e1e" stroke-width="1.6" stroke-linejoin="round"/><circle cx="1563.1" cy="127.3" r="3.6" fill="none" stroke="#1e1e1e" stroke-width="1.6"/>
<g fill="none" stroke="#1e1e1e" stroke-width="1.8" stroke-linecap="round"><circle cx="1694" cy="125.8" r="8"/><line x1="1688.2" y1="131.6" x2="1681" y2="138.8"/></g>
<g fill="none" stroke="#1e1e1e" stroke-width="1.7" stroke-linejoin="round"><path d="M1737.5 135.3 L1737.5 126 A6.7 7.5 0 0 1 1750.5 126 L1750.5 135.3"/><line x1="1735.2" y1="135.4" x2="1752.8" y2="135.4"/><line x1="1744" y1="116.8" x2="1744" y2="118.6"/></g><circle cx="1743.8" cy="137.8" r="1.6" fill="none" stroke="#1e1e1e" stroke-width="1.3"/>
<g fill="none" stroke="#1e1e1e" stroke-width="1.8" stroke-linejoin="round"><path d="M109.5 291 L112 284.3 L126.8 284.3 L129.3 291"/><rect x="109.5" y="291" width="19.8" height="8.3" rx="1"/><line x1="107.4" y1="289.6" x2="110" y2="289.6"/><line x1="128.7" y1="289.6" x2="131" y2="289.6"/><path d="M115.5 299 L116.5 296.6 L122.4 296.6 L123.4 299"/></g>
<rect x="109" y="299" width="4" height="2.2" fill="#1e1e1e"/><rect x="125.8" y="299" width="4" height="2.2" fill="#1e1e1e"/>
<circle cx="113" cy="293.8" r="0.9" fill="#1e1e1e"/><circle cx="125.8" cy="293.8" r="0.9" fill="#1e1e1e"/>
<g fill="none" stroke="#5a8fd0" stroke-width="1.8" stroke-linecap="round"><circle cx="119" cy="337.8" r="5"/><path d="M111 352 Q111.5 343.5 119 343.5 Q126.5 343.5 127.2 352"/></g>
<circle cx="571.2" cy="860.3" r="5.2" fill="none" stroke="#333" stroke-width="1.1"/><line x1="571.2" y1="859.5" x2="571.2" y2="863.0999999999999" stroke="#333" stroke-width="1.2"/><circle cx="571.2" cy="857.6999999999999" r="0.7" fill="#333"/>
<circle cx="498" cy="924.2" r="5.2" fill="none" stroke="#333" stroke-width="1.1"/><line x1="498" y1="923.4000000000001" x2="498" y2="927.0" stroke="#333" stroke-width="1.2"/><circle cx="498" cy="921.6" r="0.7" fill="#333"/>
<circle cx="1300.2" cy="427.8" r="5.2" fill="none" stroke="#333" stroke-width="1.1"/><line x1="1300.2" y1="427.0" x2="1300.2" y2="430.6" stroke="#333" stroke-width="1.2"/><circle cx="1300.2" cy="425.2" r="0.7" fill="#333"/>
<g stroke="#fff" stroke-width="1.6"><line x1="840" y1="1075.5" x2="840" y2="1095"/><line x1="830.5" y1="1085.3" x2="849.5" y2="1085.3"/></g>
</svg>
<div class="a" style="left:1744.2px;top:100.2px;width:27.6px;height:27.6px;border-radius:50%;background:#2d66b0;border:1px solid #fff;box-sizing:border-box"></div>
<div class="t" style="left:148.5px;top:113.8px;font-size:30px;font-weight:700;color:#1b1b1b;transform:scaleX(0.9785);transform-origin:1.50px 0;">Ants</div>
<div class="t" style="left:215.5px;top:113.8px;font-size:30px;font-weight:400;color:#3a3a3a;transform:scaleX(0.9940);transform-origin:1.50px 0;">Route</div>
<div class="t" style="left:344.2px;top:119.9px;font-size:15px;font-weight:400;color:#2b2b2b;transform:scaleX(1.0838);transform-origin:0.75px 0;">Magazzino</div>
<div class="t" style="left:451.9px;top:119.9px;font-size:15px;font-weight:400;color:#3a3a3a;transform:scaleX(1.0919);transform-origin:0.75px 0;">Nancy</div>
<div class="t" style="left:750.1px;top:120.1px;font-size:15px;font-weight:400;color:#222;transform:scaleX(1.0956);transform-origin:0.75px 0;">Pianificare</div>
<div class="t" style="left:879.8px;top:120.1px;font-size:15px;font-weight:400;color:#222;transform:scaleX(1.0735);transform-origin:0.75px 0;">Organizzare</div>
<div class="t" style="left:1020.2px;top:120.1px;font-size:15px;font-weight:400;color:#222;transform:scaleX(1.0836);transform-origin:0.75px 0;">Seguire</div>
<div class="t" style="left:1129.0px;top:120.1px;font-size:15px;font-weight:400;color:#222;transform:scaleX(1.0650);transform-origin:0.75px 0;">Analizzare</div>
<div class="t" style="left:1371.8px;top:120.1px;font-size:15px;font-weight:400;color:#222;transform:scaleX(1.1297);transform-origin:0.75px 0;">Clienti</div>
<div class="t" style="left:1472.5px;top:120.1px;font-size:15px;font-weight:400;color:#5b8fd6;transform:scaleX(1.0150);transform-origin:0.75px 0;">Risorse</div>
<div class="t" style="left:1577.2px;top:120.1px;font-size:15px;font-weight:400;color:#222;transform:scaleX(1.1144);transform-origin:0.75px 0;">Parametri</div>
<div class="t" style="left:1787.8px;top:119.5px;font-size:14.5px;font-weight:700;color:#fff;letter-spacing:0.20px;">MH</div>
<div class="t" style="left:1753.4px;top:107.2px;font-size:14px;font-weight:700;color:#fff;letter-spacing:0.00px;">3</div>
<div class="t" style="left:398.8px;top:190.7px;font-size:20px;font-weight:400;color:#c4845a;transform:scaleX(1.1405);transform-origin:1.00px 0;">Modifica del tuo autista: Paul Wagner</div>
<div class="t" style="left:139.2px;top:284.4px;font-size:15px;font-weight:400;color:#222;transform:scaleX(1.0870);transform-origin:0.75px 0;">Veicoli</div>
<div class="t" style="left:139.2px;top:334.2px;font-size:15px;font-weight:400;color:#5a8fd0;transform:scaleX(1.1433);transform-origin:0.75px 0;">Autisti</div>
<div class="t" style="left:425.9px;top:292.1px;font-size:15px;font-weight:400;color:#3d6ea8;transform:scaleX(1.1056);transform-origin:0.75px 0;">Informazioni generali</div>
<div class="t" style="left:636.2px;top:292.1px;font-size:15px;font-weight:400;color:#555;transform:scaleX(1.0862);transform-origin:0.75px 0;">Orari, luoghi e competenze</div>
<div class="t" style="left:888.2px;top:292.1px;font-size:15px;font-weight:400;color:#555;transform:scaleX(1.0563);transform-origin:0.75px 0;">Absences</div>
<div class="t" style="left:422.9px;top:365.0px;font-size:17px;font-weight:700;color:#252525;transform:scaleX(1.0438);transform-origin:0.85px 0;">Informazioni generali</div>
<div class="t" style="left:422.9px;top:420.1px;font-size:15px;font-weight:400;color:#333;transform:scaleX(1.0731);transform-origin:0.75px 0;">Indirizzo email *</div>
<div class="t" style="left:422.2px;top:485.1px;font-size:15px;font-weight:400;color:#333;transform:scaleX(1.1424);transform-origin:0.75px 0;">Nome</div>
<div class="t" style="left:422.2px;top:549.4px;font-size:15px;font-weight:400;color:#333;transform:scaleX(1.1126);transform-origin:0.75px 0;">Cognome</div>
<div class="t" style="left:422.2px;top:613.9px;font-size:15px;font-weight:400;color:#333;transform:scaleX(1.0938);transform-origin:0.75px 0;">Telefono</div>
<div class="t" style="left:422.2px;top:678.2px;font-size:15px;font-weight:400;color:#333;transform:scaleX(1.1192);transform-origin:0.75px 0;">Identificativo esterno</div>
<div class="t" style="left:421.9px;top:743.6px;font-size:15px;font-weight:400;color:#333;transform:scaleX(1.0753);transform-origin:0.75px 0;">Costo orario (€/h)</div>
<div class="t" style="left:421.9px;top:801.6px;font-size:15px;font-weight:400;color:#333;transform:scaleX(1.0624);transform-origin:0.75px 0;">Veicolo assegnato *</div>
<div class="t" style="left:421.9px;top:853.3px;font-size:15px;font-weight:400;color:#333;transform:scaleX(1.0770);transform-origin:0.75px 0;">Ruolo addizionale *</div>
<div class="t" style="left:421.9px;top:896.5px;font-size:15px;font-weight:400;color:#333;transform:scaleX(1.0921);transform-origin:0.75px 0;">Calendario dei giorni non</div>
<div class="t" style="left:421.9px;top:917.1px;font-size:15px;font-weight:400;color:#333;transform:scaleX(1.1077);transform-origin:0.75px 0;">lavorativi</div>
<div class="t" style="left:421.9px;top:967.0px;font-size:15px;font-weight:400;color:#333;transform:scaleX(1.0686);transform-origin:0.75px 0;">Colore sulla mappa *</div>
<div class="t" style="left:662.8px;top:420.1px;font-size:15px;font-weight:400;color:#333;transform:scaleX(1.0901);transform-origin:0.75px 0;">paul@antsroute.com</div>
<div class="t" style="left:662.8px;top:485.1px;font-size:15px;font-weight:400;color:#333;transform:scaleX(1.0795);transform-origin:0.75px 0;">Paul</div>
<div class="t" style="left:662.8px;top:549.4px;font-size:15px;font-weight:400;color:#333;transform:scaleX(1.1155);transform-origin:0.75px 0;">Wagner</div>
<div class="t" style="left:662.8px;top:613.9px;font-size:15px;font-weight:400;color:#999;transform:scaleX(1.0938);transform-origin:0.75px 0;">Telefono</div>
<div class="t" style="left:662.8px;top:678.2px;font-size:15px;font-weight:400;color:#999;transform:scaleX(1.1141);transform-origin:0.75px 0;">Identificativo esterno</div>
<div class="t" style="left:662.8px;top:743.6px;font-size:15px;font-weight:400;color:#333;transform:scaleX(1.2420);transform-origin:0.75px 0;">0</div>
<div class="t" style="left:661.9px;top:801.6px;font-size:15px;font-weight:400;color:#333;transform:scaleX(1.0339);transform-origin:0.75px 0;">76-UYG-09</div>
<div class="t" style="left:662.8px;top:853.3px;font-size:15px;font-weight:400;color:#333;transform:scaleX(1.0775);transform-origin:0.75px 0;">Nessun ruolo addizionale</div>
<div class="t" style="left:662.8px;top:907.0px;font-size:15px;font-weight:400;color:#333;transform:scaleX(1.0729);transform-origin:0.75px 0;">Nessun calendario</div>
<div class="t" style="left:422.1px;top:1072.6px;font-size:17px;font-weight:700;color:#252525;transform:scaleX(1.0631);transform-origin:0.85px 0;">Competenze di default</div>
<div class="t" style="left:863.4px;top:1077.6px;font-size:14.5px;font-weight:700;color:#fff;transform:scaleX(1.0583);transform-origin:0.73px 0;">Aggiungi competenza</div>
<div class="t" style="left:441.6px;top:1142.3px;font-size:15px;font-weight:400;color:#333;transform:scaleX(1.0872);transform-origin:0.75px 0;">Nessuna competenza disponibile</div>
<div class="t" style="left:1136.2px;top:365.4px;font-size:17px;font-weight:700;color:#252525;transform:scaleX(1.0636);transform-origin:0.85px 0;">Perimetro di attività</div>
<div class="t" style="left:1136.2px;top:421.1px;font-size:15px;font-weight:400;color:#333;transform:scaleX(1.0783);transform-origin:0.75px 0;">Campo d'azione (km)</div>
<div class="t" style="left:1376.2px;top:421.1px;font-size:15px;font-weight:400;color:#999;transform:scaleX(1.1456);transform-origin:0.75px 0;">Non definito</div>
<div class="t" style="left:1136.5px;top:483.7px;font-size:15px;font-weight:400;color:#333;transform:scaleX(1.1087);transform-origin:0.75px 0;">Perimetro geografico</div>
<div class="t" style="left:1676.8px;top:484.5px;font-size:14px;font-weight:700;color:#fff;transform:scaleX(1.0978);transform-origin:0.70px 0;">Modifica</div>
</div></div>
<!-- aide -->
<div class="a" style="left:1690.6px;top:1114.7px;width:128.2px;height:55px;border-radius:28px;background:#2f5de8"></div>
<svg class="a" style="left:1710px;top:1125px" width="40" height="40" viewBox="1710 1125 40 40"><path d="M1721 1150.5 A10.3 10.3 0 1 1 1725.5 1153 L1718.8 1154.3 Z" fill="none" stroke="#fff" stroke-width="2.6" stroke-linejoin="round"/></svg>
<div class="t" style="left:1750.0px;top:1133.2px;font-size:19px;font-weight:700;color:#fff;transform:scaleX(1.0436);transform-origin:0.95px 0;">Aide</div>
</body></html>
